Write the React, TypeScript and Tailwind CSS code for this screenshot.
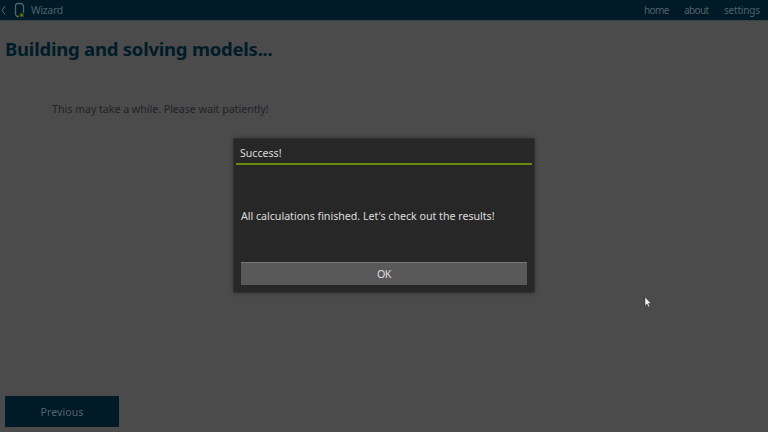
function Header() {
  return (
    <header className="flex h-[21px] items-center border-b border-[#3a4145] bg-[#001a27] text-[10px] leading-5 text-[#51626a]">
      <svg className="h-5 w-[31px] shrink-0" viewBox="0 0 31 20" fill="none">
        <path d="M5 6 2 10.3 5 14.6" stroke="#586970" strokeWidth="1" />
        <path d="M16.5 3.5h5l2 2V13M19 16.5h-2l-1.5-2V5l1.5-1.5" stroke="#52646c" strokeWidth="1.3" />
        <path d="m21 12.5 1.2 1.4 1.9-.4-1 1.7 1 1.5-2-.4-1.5 1.5-.3-2-1.3-.8 1.4-.5z" fill="#5f7010" />
      </svg>
      <span className="w-[32px] text-[10.5px] tracking-[-0.35px]">Wizard</span>
      <nav className="ml-auto flex pr-[7px]">
        <span className="w-[40px] whitespace-nowrap tracking-[-0.6px]">home</span>
        <span className="w-[40px] whitespace-nowrap tracking-[-0.6px]">about</span>
        <span className="w-[37px] whitespace-nowrap tracking-[-0.2px]">settings</span>
      </nav>
    </header>
  );
}

function SuccessDialog() {
  return (
    <div className="absolute inset-0 flex items-center justify-center pb-[2px]">
      <section
        role="dialog"
        className="flex h-[155px] w-[302px] flex-col rounded-[2px] border border-[#303030] bg-[#272727] px-[2px] text-[#dedede] shadow-[0_0_4px_#353535]"
      >
        <h2 className="h-[26px] border-b-2 border-[#648a10] pl-[4px] pt-px text-[10.6px] leading-[26px]">
          <span className="block h-[24px]">Success!</span>
        </h2>
        <p className="mt-[42px] whitespace-nowrap pl-[5px] text-[10.7px] leading-[18px] tracking-[-0.035px]">
          All calculations finished. Let's check out the results!
        </p>
        <button className="mx-[5px] mt-auto mb-[7px] h-[23px] border-t border-[#747a7a] bg-[#595959] text-[10.7px] leading-[22px] tracking-[-0.4px]">
          OK
        </button>
      </section>
    </div>
  );
}

function Pointer() {
  return (
    <svg className="absolute left-[644px] top-[296px] h-3 w-2" viewBox="0 0 8 12">
      <path d="M1 1v8.7l2-1.8 1.3 3 1.4-.7-1.3-2.7H7z" fill="#f4f4f4" stroke="#171717" strokeWidth=".4" />
    </svg>
  );
}

export default function App() {
  return (
    <div className="relative flex h-[432px] w-[768px] flex-col overflow-hidden bg-[#4b4b4b] font-['Noto_Sans',sans-serif]">
      <Header />
      <main className="flex flex-1 flex-col px-[5px] pb-[5px]">
        <h1 className="mt-[12px] whitespace-nowrap text-[18.5px] leading-[32px] font-bold tracking-[-0.23px] text-[#001c28]">
          Building and solving models...
        </h1>
        <p className="mt-[35px] pl-[47px] text-[10.7px] leading-[18px] tracking-[-0.045px] text-[#202326]">
          This may take a while. Please wait patiently!
        </p>
        <button className="mt-auto h-[31px] w-[114px] bg-[#001a27] pt-px text-[10.5px] leading-[30px] tracking-[0.1px] text-[#52646c]">
          Previous
        </button>
      </main>
      <SuccessDialog />
      <Pointer />
    </div>
  );
}
